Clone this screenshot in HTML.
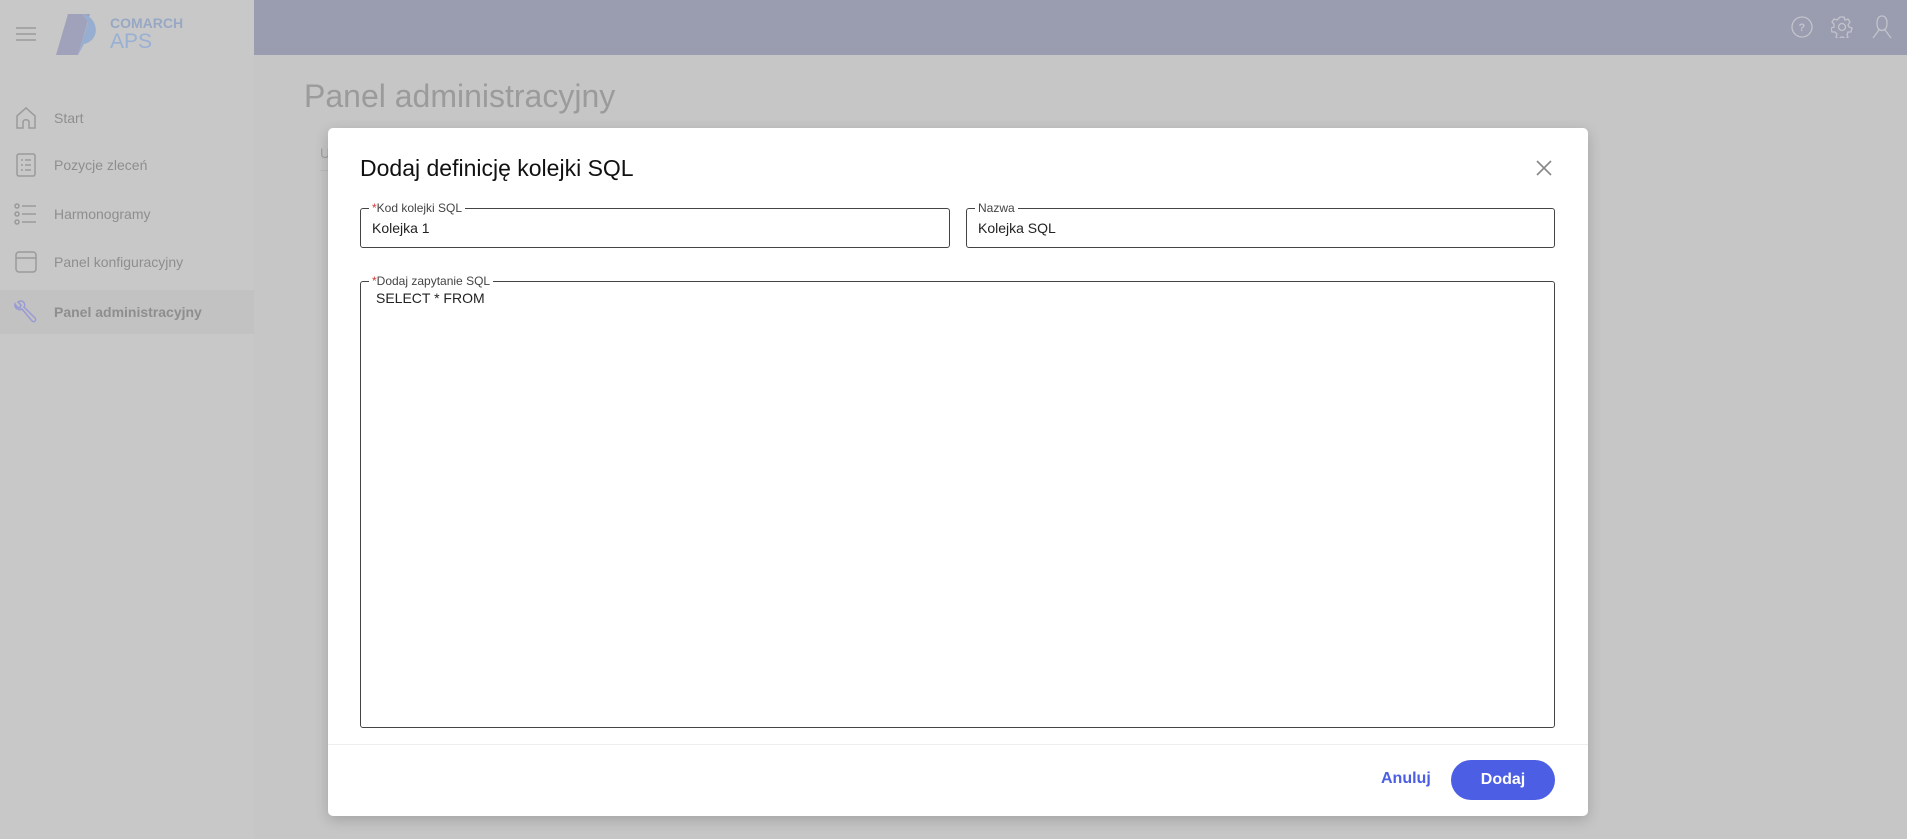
<!DOCTYPE html>
<html><head><meta charset="utf-8"><style>
*{box-sizing:border-box;margin:0;padding:0}
body{width:1907px;height:839px;overflow:hidden;background:#c6c6c6;font-family:"Liberation Sans",sans-serif;position:relative}
.side{position:absolute;left:0;top:0;width:254px;height:839px;background:#c8c8c8}
.hdr{position:absolute;left:254px;top:0;right:0;height:55px;background:#9a9cb0}
.nav{position:absolute;left:0;width:254px;height:44px;display:flex;align-items:center;color:#8e8e8e;font-size:14px}
.nav svg{position:absolute;left:14px}
.nav span{position:absolute;left:54px}
.modal{position:absolute;left:328px;top:128px;width:1260px;height:688px;background:#fff;border-radius:5px;box-shadow:0 4px 14px rgba(0,0,0,.18)}
.fld{position:absolute;border:1px solid #444;border-radius:3px}
.lbl{position:absolute;top:-9px;left:8px;background:#fff;padding:0 3px;font-size:12px;color:#444;line-height:16px}
.lbl b{color:#d33;font-weight:normal}
.val{position:absolute;left:11px;font-size:14px;color:#222}
</style></head><body>
<div class="side"></div>
<div class="nav" style="top:290px;background:#c2c2c3;height:44px"></div>
<div class="hdr"></div>
<svg style="position:absolute;left:16px;top:26px" width="20" height="16"><path d="M0 2H20M0 8H20M0 14H20" stroke="#9a9a9a" stroke-width="1.5"/></svg>
<svg style="position:absolute;left:54px;top:14px" width="46" height="41"><path d="M14 0H36L24 41H2Z" fill="#a0a2bc"/><path d="M28 0C44 2 48 26 30 30L24 41 34 8Z" fill="#98aed0"/></svg>
<div style="position:absolute;left:110px;top:15px;font-size:14px;font-weight:bold;color:#98a8c4">COMARCH</div>
<div style="position:absolute;left:110px;top:30px;font-size:21px;color:#98b0d4">APS</div>
<div class="nav" style="top:96px"><svg width="24" height="24" fill="none" stroke="#9a9a9a" stroke-width="1.5"><path d="M3 22V10L12 2 21 10V22H15V16C15 13 9 13 9 16V22Z"/></svg><span>Start</span></div>
<div class="nav" style="top:143px"><svg width="24" height="26" fill="none" stroke="#9a9a9a" stroke-width="1.5"><rect x="3" y="2" width="18" height="22" rx="2"/><path d="M7 8h2M11 8h6M7 13h2M11 13h6M7 18h2M11 18h6"/></svg><span>Pozycje zleceń</span></div>
<div class="nav" style="top:192px"><svg width="24" height="24" fill="none" stroke="#9a9a9a" stroke-width="1.5"><circle cx="3" cy="4" r="2"/><circle cx="3" cy="12" r="2"/><circle cx="3" cy="20" r="2"/><path d="M8 4h14M8 12h14M8 20h14"/></svg><span>Harmonogramy</span></div>
<div class="nav" style="top:240px"><svg width="24" height="24" fill="none" stroke="#9a9a9a" stroke-width="1.5"><rect x="2" y="2" width="20" height="20" rx="3"/><path d="M2 8h20"/></svg><span>Panel konfiguracyjny</span></div>
<div class="nav" style="top:290px"><svg width="24" height="26" fill="none" stroke="#9a9ad4" stroke-width="1.5"><path d="M4 3l3 3-1 3-3-1-2-3C0 9 5 12 8 10l10 12c2 2 5-1 3-3L10 8C12 5 9 0 4 3Z"/></svg><span style="font-weight:bold">Panel administracyjny</span></div>
<svg style="position:absolute;left:1791px;top:16px" width="22" height="22" fill="none" stroke="#c4c4cc" stroke-width="1.3"><circle cx="11" cy="11" r="10"/><text x="7.5" y="15" font-size="11" fill="#c4c4cc" stroke="none" font-family="Liberation Sans" font-weight="bold">?</text></svg>
<svg style="position:absolute;left:1831px;top:16px" width="22" height="22" fill="none" stroke="#c4c4cc" stroke-width="1.3"><circle cx="11" cy="11" r="3.5"/><path d="M9 1h4l1 3 3-1 2 3-2 3 1 2 3 1v0l-1 4-3 0-1 3 1 2-3 2-2-2h-2l-2 2-3-2 1-3-2-2-3 0-1-4 3-1 0-3-2-2 2-3 3 1Z"/></svg>
<svg style="position:absolute;left:1872px;top:15px" width="20" height="25" fill="none" stroke="#c4c4cc" stroke-width="1.3"><path d="M10 1C4 1 4 11 7 15L1 23M10 1C16 1 16 11 13 15L19 23M7 14q3 3 6 0"/></svg>
<div style="position:absolute;left:304px;top:78px;font-size:32px;color:#9b9b9b">Panel administracyjny</div>
<div style="position:absolute;left:320px;top:145px;font-size:14px;color:#a0a0a0">U</div>
<div style="position:absolute;left:320px;top:170px;width:20px;border-top:1px solid #bbb"></div>
<div class="modal">
<div style="position:absolute;left:32px;top:27px;font-size:23px;color:#111">Dodaj definicję kolejki SQL</div>
<svg style="position:absolute;left:1208px;top:32px" width="16" height="16"><path d="M1 1L15 15M15 1L1 15" stroke="#888" stroke-width="1.6"/></svg>
<div class="fld" style="left:32px;top:80px;width:590px;height:40px"><div class="lbl"><b>*</b>Kod kolejki SQL</div><div class="val" style="top:11px">Kolejka 1</div></div>
<div class="fld" style="left:638px;top:80px;width:589px;height:40px"><div class="lbl">Nazwa</div><div class="val" style="top:11px">Kolejka SQL</div></div>
<div class="fld" style="left:32px;top:153px;width:1195px;height:447px"><div class="lbl"><b>*</b>Dodaj zapytanie SQL</div><div class="val" style="top:8px;left:15px">SELECT * FROM</div></div>
<div style="position:absolute;left:0;right:0;top:616px;border-top:1px solid #eee"></div>
<div style="position:absolute;left:1053px;top:642px;font-size:16px;font-weight:bold;color:#4b5ee4">Anuluj</div>
<div style="position:absolute;left:1123px;top:632px;width:104px;height:40px;border-radius:20px;background:#4b5ee4;color:#fff;font-size:16px;font-weight:bold;text-align:center;line-height:40px">Dodaj</div>
</div>
</body></html>
